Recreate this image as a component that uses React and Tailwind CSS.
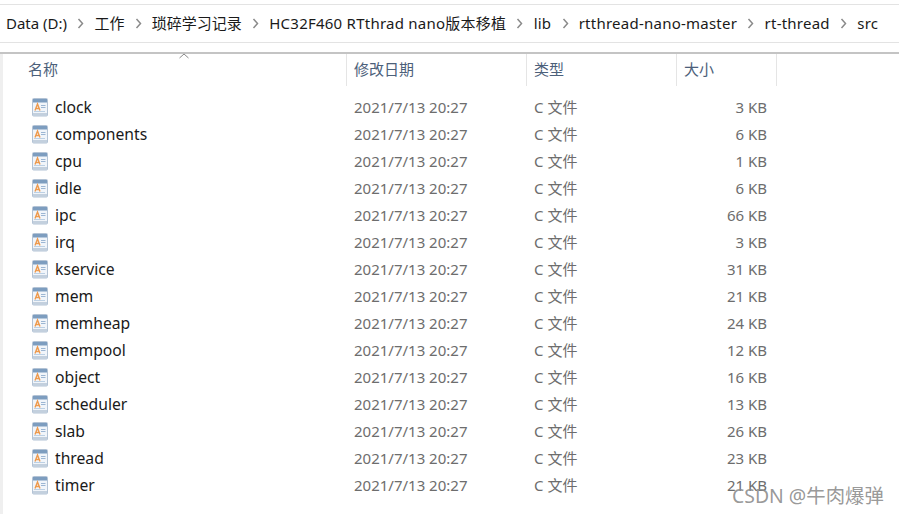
const crumbs = [["Data (D:)", ""], ["工作", ""], ["琐碎学习记录", ""], ["HC32F460 RTthrad nano版本移植", "tracking-[0.24px]"], ["lib", "tracking-[0.24px]"], ["rtthread-nano-master", "tracking-[0.24px]"], ["rt-thread", "tracking-[0.24px]"], ["src", "tracking-[0.24px]"]];
const files = [["clock", 3], ["components", 6], ["cpu", 1], ["idle", 6], ["ipc", 66], ["irq", 3], ["kservice", 31], ["mem", 21], ["memheap", 24], ["mempool", 12], ["object", 16], ["scheduler", 13], ["slab", 26], ["thread", 23], ["timer", 21]];

function FileIcon() {
  return (
    <svg width="16" height="19" viewBox="0 0 16 19" className="shrink-0">
      <rect x="0.5" y="0.5" width="15" height="17.5" rx="1" fill="#f1f5fa" stroke="#b3c3d5" />
      <rect x="1" y="1" width="14" height="3.5" fill="#7d9dbf" />
      <rect x="1" y="15" width="14" height="3" fill="#c3d0de" />
      <path d="M3 12.5 L5.5 6 L8 12.5 M4 10.5 H7" fill="none" stroke="#ee9a4d" strokeWidth="1.4" />
      <path d="M9 7.5 H13.5 M9 9.5 H13.5" stroke="#9cb6d3" strokeWidth="1" />
      <rect x="2" y="13" width="11" height="1" fill="#bcd0e4" />
    </svg>
  );
}

function Chevron() {
  return (
    <svg width="7" height="11" viewBox="0 0 7 11" className="shrink-0">
      <path d="M1.5 1 L5.5 5.5 L1.5 10" fill="none" stroke="#8a8a8a" strokeWidth="1.5" />
    </svg>
  );
}

export default function App() {
  return (
    <div className="relative w-[899px] h-[514px] overflow-hidden bg-white font-['Noto_Sans','Noto_Sans_CJK_SC',sans-serif]">
      <div className="mt-1 h-[39px] flex items-center gap-[10.2px] pl-[6px] border-y border-[#e3e3e3] text-[15px] text-[#1a1a1a] whitespace-nowrap">
        {crumbs.map(([c, cls], i) => (
          <div key={c} className="flex items-center gap-[10.2px]">
            {i > 0 && <Chevron />}
            <span className={cls}>{c}</span>
          </div>
        ))}
      </div>
      <div className="mt-[9px] h-[462px] border-t-2 border-[#c4c4c4] flex flex-col">
        <div className="flex-1 border-l-[3px] border-[#efefef]">
          <div className="relative flex h-[32px] text-[15px] leading-[22px] text-[#4c607a]">
            <div className="w-[344px] pl-[25px] pt-[4px] border-r border-[#e5e5e5]">名称</div>
            <div className="w-[180px] pl-[7px] pt-[4px] border-r border-[#e5e5e5]">修改日期</div>
            <div className="w-[150px] pl-[7px] pt-[4px] border-r border-[#e5e5e5]">类型</div>
            <div className="w-[100px] pl-[7px] pt-[4px] border-r border-[#e5e5e5]">大小</div>
            <svg width="10" height="6" viewBox="0 0 10 6" className="absolute left-[176px] top-[-1px]">
              <path d="M0.5 5 L5 1 L9.5 5" fill="none" stroke="#8a8a8a" />
            </svg>
          </div>
          <div className="mt-[8px] flex flex-col">
            {files.map(([name, size]) => (
              <div key={name} className="flex h-[27px] items-center text-[15px]">
                <div className="w-[344px] flex items-center gap-[7px] pl-[29px] text-[#1a1a1a]">
                  <FileIcon />
                  <span className="text-[15.7px]">{name}</span>
                </div>
                <div className="w-[180px] pl-[7px] text-[#6d6d6d]">2021/7/13 20:27</div>
                <div className="w-[150px] pl-[7px] text-[#6d6d6d]">C 文件</div>
                <div className="w-[90px] text-right text-[#6d6d6d]">{size} KB</div>
              </div>
            ))}
          </div>
        </div>
      </div>
      <div className="absolute left-[732px] top-[484px] text-[19.4px] leading-6 text-[#8c8c8c]/90">CSDN @牛肉爆弹</div>
    </div>
  );
}
